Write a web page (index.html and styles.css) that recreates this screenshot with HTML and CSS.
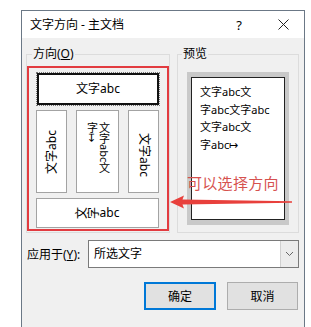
FILE: index.html
```html
<!DOCTYPE html>
<html lang="zh-CN">
<head>
  <meta charset="UTF-8">
  <link rel="stylesheet" href="styles.css">
</head>
<body>
  <div class="dialog">
    <div class="titlebar">
      <span class="title">文字方向 - 主文档</span>
      <span class="help">?</span>
      <span class="close">
        <svg width="11" height="11" viewBox="0 0 11 11"><path d="M0.5 0.5 L10.5 10.5 M10.5 0.5 L0.5 10.5" stroke="#222" stroke-width="1"/></svg>
      </span>
    </div>
    <div class="content">
      <div class="groups">
        <fieldset class="group dir-group">
          <legend>方向(<u>O</u>)</legend>
          <div class="options">
            <div class="opt opt-top selected"><span>文字abc</span></div>
            <div class="opt opt-v"><span class="rot-l">文字abc</span></div>
            <div class="opt opt-v opt-stack">
              <span class="vcol">文字abc文<br>字↦</span>
            </div>
            <div class="opt opt-v"><span class="rot-r">文字abc</span></div>
            <div class="opt opt-bottom"><span><i class="ch">文</i><i class="ch">字</i>abc</span></div>
          </div>
        </fieldset>
        <fieldset class="group preview-group">
          <legend>预览</legend>
          <div class="frame">
            <div class="page">
              <p>文字abc文</p>
              <p>字abc文字abc</p>
              <p>文字abc文</p>
              <p>字abc↦</p>
            </div>
          </div>
        </fieldset>
      </div>
      <div class="apply-row">
        <label>应用于(<u>Y</u>):</label>
        <div class="select">
          <span class="value">所选文字</span>
          <span class="drop">
            <svg width="9" height="6" viewBox="0 0 9 6"><path d="M1 1 L4.5 4.5 L8 1" fill="none" stroke="#666" stroke-width="1"/></svg>
          </span>
        </div>
      </div>
      <div class="buttons">
        <button class="btn default">确定</button>
        <button class="btn">取消</button>
      </div>
    </div>
    <div class="note">可以选择方向</div>
    <svg class="arrow" width="122" height="14" viewBox="0 0 122 14">
      <polygon points="0,7 14,0.5 12.5,4.5 122,6.2 122,7.8 12.5,9.5 14,13.5" fill="#e8403c"/>
    </svg>
  </div>
</body>
</html>
```

FILE: styles.css
```css
html, body {
  margin: 0;
  padding: 0;
  overflow: hidden;
}
body {
  background: #fff;
  font-family: "Noto Sans", "Noto Sans CJK SC", sans-serif;
  font-size: 12px;
  color: #000;
}
.dialog {
  position: relative;
  margin: 10px 0 0 21px;
  width: 282px;
  height: 330px;
  border: 1px solid #6b7886;
  background: #f0f0f0;
}
.titlebar {
  display: flex;
  align-items: center;
  height: 27px;
  background: #fff;
  padding-left: 8px;
}
.title {
  flex: 1;
  line-height: 16px;
}
.help {
  width: 20px;
  text-align: center;
  font-size: 13px;
}
.close {
  display: flex;
  justify-content: center;
  width: 30px;
  margin: 0 6px 0 19px;
}
.content {
  padding: 8px 5px 0 4px;
}
.groups {
  display: flex;
  gap: 7px;
}
.group {
  margin: 0;
  padding: 0;
  border: 1px solid #dcdcdc;
  min-width: 0;
}
.group legend {
  margin-left: 4px;
  padding: 0 1px;
  line-height: 16px;
}
.dir-group {
  width: 142px;
  padding-bottom: 1px;
}
.dir-group legend {
  margin-left: 5px;
}
.options {
  margin-top: 4px;
  border: 2px solid #e23b40;
  padding: 5px 7px 1px 7px;
  display: grid;
  grid-template-columns: 31px 43px 31px;
  grid-template-rows: 32px 88px 35px;
  column-gap: 9px;
  row-gap: 0;
}
.opt {
  background: #fff;
  border: 1px solid #a3a3a3;
  display: flex;
  align-items: center;
  justify-content: center;
  white-space: nowrap;
  line-height: 14px;
}
.opt-top {
  grid-column: 1 / -1;
  margin: 0 0 0 1px;
}
.selected {
  border: 2px solid #111;
  outline: 1px dotted #777;
  outline-offset: 0;
}
.opt-v {
  margin-top: 5px;
}
.opt-bottom {
  grid-column: 1 / -1;
  margin-top: 5px;
}
.rot-l {
  transform: rotate(-90deg);
}
.rot-r {
  transform: rotate(90deg) translateX(3px);
}
.opt-stack {
  align-items: flex-start;
  padding-top: 11px;
}
.vcol {
  writing-mode: vertical-rl;
  font-size: 11px;
  line-height: 12px;
}
.ch {
  display: inline-block;
  font-style: normal;
  transform: rotate(-90deg);
}
.preview-group {
  width: 120px;
}
.frame {
  margin: 10px 0 0 9px;
  width: 94px;
  padding: 5px 4px;
  background: #c9c9c9;
}
.page {
  height: 136px;
  background: #fff;
  border: 1px solid #222;
  padding: 5px 0 0 8px;
  font-size: 11px;
}
.page p {
  margin: 0;
  line-height: 17.5px;
}
.apply-row {
  display: flex;
  align-items: center;
  margin-top: 7px;
}
.apply-row label {
  width: 61px;
  margin-left: 1px;
}
.select {
  flex: 1;
  display: flex;
  height: 26px;
  border: 1px solid #7a7a7a;
  background: #fff;
}
.select .value {
  flex: 1;
  padding-left: 5px;
  line-height: 26px;
}
.select .drop {
  width: 17px;
  display: flex;
  align-items: center;
  justify-content: center;
  background: #ececec;
  border-left: 1px solid #d0d0d0;
}
.buttons {
  display: flex;
  justify-content: flex-end;
  gap: 11px;
  margin-top: 14px;
  padding-right: 1px;
}
.btn {
  width: 71px;
  height: 28px;
  background: #e1e1e1;
  border: 1px solid #adadad;
  font-family: inherit;
  font-size: 12px;
  color: #000;
  padding: 0;
}
.btn.default {
  width: 72px;
  border: 2px solid #0078d7;
}
.note {
  position: absolute;
  left: 165px;
  top: 162px;
  font-size: 15px;
  line-height: 20px;
  color: #d6524f;
  letter-spacing: 0.3px;
}
.arrow {
  position: absolute;
  left: 148px;
  top: 184px;
}
```
